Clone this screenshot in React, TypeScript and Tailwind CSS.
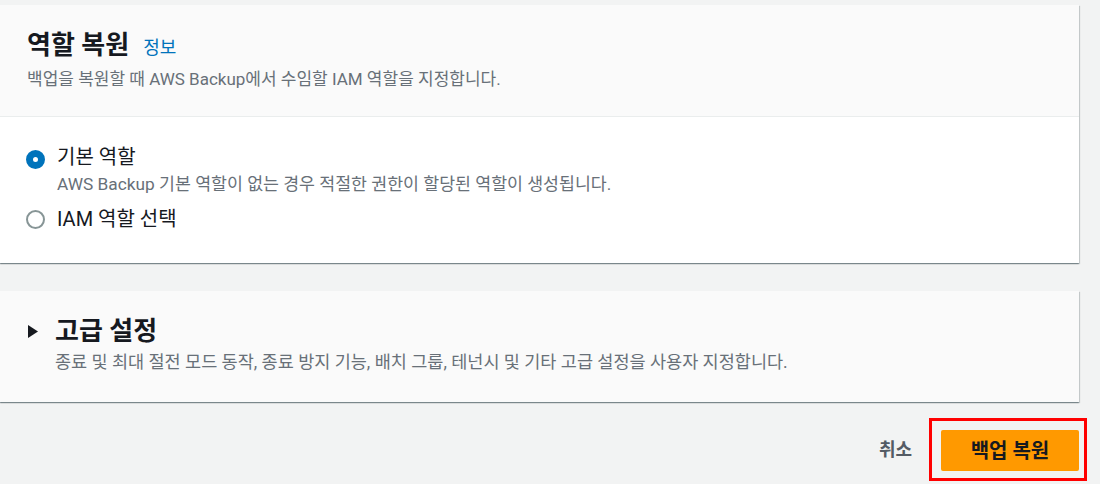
import React, { useState } from 'react';

const shadow = 'shadow-[0_1px_1px_0_rgba(0,28,36,0.3),1px_1px_1px_0_rgba(0,28,36,0.15),-1px_1px_1px_0_rgba(0,28,36,0.15)]';

type Role = 'default' | 'iam';

const Radio: React.FC<{ checked: boolean }> = ({ checked }) =>
  checked ? (
    <span className="block w-[19px] h-[19px] rounded-full border-[7px] border-[#0073bb] bg-white" />
  ) : (
    <span className="block w-[19px] h-[19px] rounded-full border-2 border-[#879596] bg-white" />
  );

const App: React.FC = () => {
  const [role, setRole] = useState<Role>('default');

  return (
    <div className="min-h-screen bg-[#f2f3f3] pt-[5px] pr-[21px] font-['Roboto','Noto_Sans_CJK_KR',sans-serif] text-[#16191f]">
      {/* Role restore card */}
      <section className={`bg-white ${shadow}`}>
        <div className="bg-[#fafafa] border-b border-[#eaeded] pl-[27px] pt-[23px] pb-[25px]">
          <h2 className="flex items-baseline text-[26px] font-bold leading-[34px]">
            역할 복원
            <a href="#" className="ml-[14px] text-[18px] font-normal text-[#0073bb]">정보</a>
          </h2>
          <p className="mt-[2px] text-[17px] leading-[24px] text-[#687078]">
            백업을 복원할 때 AWS Backup에서 수임할 IAM 역할을 지정합니다.
          </p>
        </div>
        <div className="pl-[26px] pt-[25px] pb-[29px] flex flex-col gap-[8px]">
          <div className="flex items-start cursor-pointer" onClick={() => setRole('default')}>
            <span className="mt-[8px] shrink-0">
              <Radio checked={role === 'default'} />
            </span>
            <span className="ml-[12px]">
              <span className="block text-[20px] leading-[30px]">기본 역할</span>
              <span className="block text-[17.3px] leading-[24px] text-[#687078]">
                AWS Backup 기본 역할이 없는 경우 적절한 권한이 할당된 역할이 생성됩니다.
              </span>
            </span>
          </div>
          <div className="flex items-start cursor-pointer" onClick={() => setRole('iam')}>
            <span className="mt-[6px] shrink-0">
              <Radio checked={role === 'iam'} />
            </span>
            <span className="ml-[12px] text-[20px] leading-[30px]">IAM 역할 선택</span>
          </div>
        </div>
      </section>

      {/* Advanced settings card */}
      <section className={`mt-[28px] bg-[#fafafa] ${shadow} pl-[28px] pt-[23px] pb-[28px]`}>
        <div className="flex items-center">
          <svg width="10" height="13" viewBox="0 0 10 13" className="shrink-0">
            <path d="M0 0 L10 6.5 L0 13 Z" fill="#16191f" />
          </svg>
          <h2 className="ml-[17px] text-[26px] font-bold leading-[34px]">고급 설정</h2>
        </div>
        <p className="mt-[2px] pl-[27px] text-[17.5px] leading-[24px] text-[#687078]">
          종료 및 최대 절전 모드 동작, 종료 방지 기능, 배치 그룹, 테넌시 및 기타 고급 설정을 사용자 지정합니다.
        </p>
      </section>

      {/* Actions */}
      <div className="mt-[16px] flex items-center justify-end">
        <button className="mr-[17px] text-[18px] font-bold text-[#545b64]">취소</button>
        <div className="-mr-[8px] border-[3px] border-[#ff0000] pt-[9px] pb-[7px] pl-[9px] pr-[5px]">
          <button className="block w-[138px] h-[41px] rounded-[2px] bg-[#ff9900] text-[20px] font-bold text-[#16191f]">
            백업 복원
          </button>
        </div>
      </div>
    </div>
  );
};

export default App;
